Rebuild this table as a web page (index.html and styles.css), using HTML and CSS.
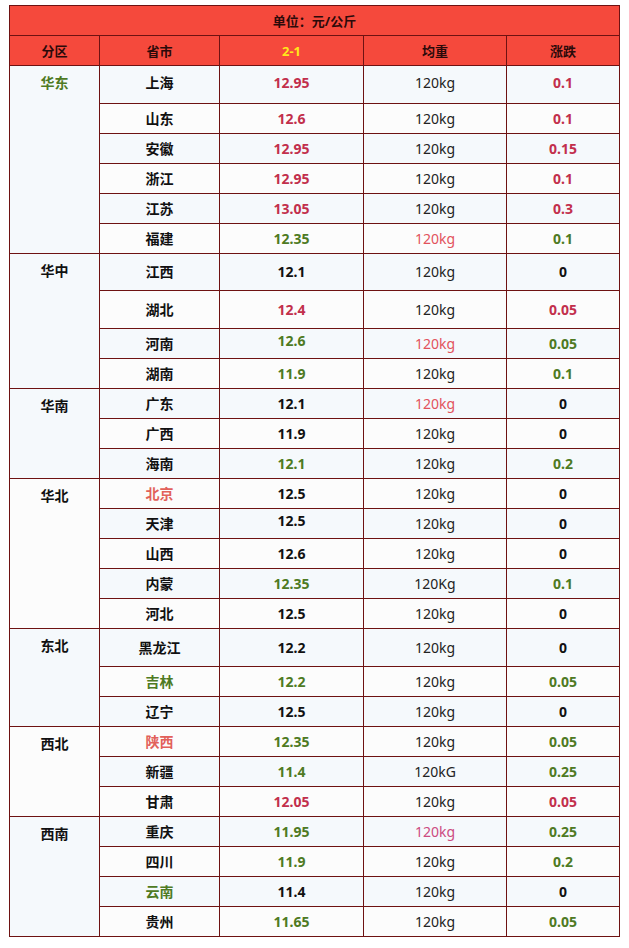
FILE: index.html
```html
<!DOCTYPE html>
<html lang="zh-CN">
<head>
<meta charset="utf-8">
<title>生猪价格</title>
<link rel="stylesheet" href="styles.css">
</head>
<body>
<table class="price">
  <colgroup>
    <col class="c1"><col class="c2"><col class="c3"><col class="c4"><col class="c5">
  </colgroup>
  <thead>
    <tr class="hd"><th colspan="5" class="unit">单位：元/公斤</th></tr>
    <tr class="hd"><th>分区</th><th>省市</th><th class="yel">2-1</th><th>均重</th><th>涨跌</th></tr>
  </thead>
  <tbody>
    <tr class="odd tall first"><td rowspan="6" class="reg grn">华东</td><td class="prov">上海</td><td class="num red">12.95</td><td class="wt">120kg</td><td class="num red">0.1</td></tr>
    <tr class="even"><td class="prov">山东</td><td class="num red">12.6</td><td class="wt">120kg</td><td class="num red">0.1</td></tr>
    <tr class="odd"><td class="prov">安徽</td><td class="num red">12.95</td><td class="wt">120kg</td><td class="num red">0.15</td></tr>
    <tr class="even"><td class="prov">浙江</td><td class="num red">12.95</td><td class="wt">120kg</td><td class="num red">0.1</td></tr>
    <tr class="odd"><td class="prov">江苏</td><td class="num red">13.05</td><td class="wt">120kg</td><td class="num red">0.3</td></tr>
    <tr class="even"><td class="prov">福建</td><td class="num grn">12.35</td><td class="wt pink">120kg</td><td class="num grn">0.1</td></tr>

    <tr class="odd tall37"><td rowspan="4" class="reg">华中</td><td class="prov">江西</td><td class="num">12.1</td><td class="wt">120kg</td><td class="num">0</td></tr>
    <tr class="even tall"><td class="prov">湖北</td><td class="num red">12.4</td><td class="wt">120kg</td><td class="num red">0.05</td></tr>
    <tr class="odd"><td class="prov">河南</td><td class="num grn"><span class="up">12.6</span></td><td class="wt pink">120kg</td><td class="num grn">0.05</td></tr>
    <tr class="even"><td class="prov">湖南</td><td class="num grn">11.9</td><td class="wt">120kg</td><td class="num grn">0.1</td></tr>

    <tr class="odd"><td rowspan="3" class="reg">华南</td><td class="prov">广东</td><td class="num">12.1</td><td class="wt pink">120kg</td><td class="num">0</td></tr>
    <tr class="even"><td class="prov">广西</td><td class="num">11.9</td><td class="wt">120kg</td><td class="num">0</td></tr>
    <tr class="odd"><td class="prov">海南</td><td class="num grn">12.1</td><td class="wt">120kg</td><td class="num grn">0.2</td></tr>

    <tr class="even"><td rowspan="5" class="reg">华北</td><td class="prov salmon">北京</td><td class="num">12.5</td><td class="wt">120kg</td><td class="num">0</td></tr>
    <tr class="odd"><td class="prov">天津</td><td class="num"><span class="up">12.5</span></td><td class="wt">120kg</td><td class="num">0</td></tr>
    <tr class="even"><td class="prov">山西</td><td class="num">12.6</td><td class="wt">120kg</td><td class="num">0</td></tr>
    <tr class="odd"><td class="prov">内蒙</td><td class="num grn">12.35</td><td class="wt">120Kg</td><td class="num grn">0.1</td></tr>
    <tr class="even"><td class="prov">河北</td><td class="num">12.5</td><td class="wt">120kg</td><td class="num">0</td></tr>

    <tr class="odd tall"><td rowspan="3" class="reg">东北</td><td class="prov">黑龙江</td><td class="num">12.2</td><td class="wt">120kg</td><td class="num">0</td></tr>
    <tr class="even"><td class="prov grn">吉林</td><td class="num grn">12.2</td><td class="wt">120kg</td><td class="num grn">0.05</td></tr>
    <tr class="odd"><td class="prov">辽宁</td><td class="num">12.5</td><td class="wt">120kg</td><td class="num">0</td></tr>

    <tr class="even"><td rowspan="3" class="reg">西北</td><td class="prov salmon">陕西</td><td class="num grn">12.35</td><td class="wt">120kg</td><td class="num grn">0.05</td></tr>
    <tr class="odd"><td class="prov">新疆</td><td class="num grn">11.4</td><td class="wt">120kG</td><td class="num grn">0.25</td></tr>
    <tr class="even"><td class="prov">甘肃</td><td class="num red">12.05</td><td class="wt">120kg</td><td class="num red">0.05</td></tr>

    <tr class="odd"><td rowspan="4" class="reg">西南</td><td class="prov">重庆</td><td class="num grn">11.95</td><td class="wt magenta">120kg</td><td class="num grn">0.25</td></tr>
    <tr class="even"><td class="prov">四川</td><td class="num grn">11.9</td><td class="wt">120kg</td><td class="num grn">0.2</td></tr>
    <tr class="odd"><td class="prov grn">云南</td><td class="num">11.4</td><td class="wt">120kg</td><td class="num">0</td></tr>
    <tr class="even"><td class="prov">贵州</td><td class="num grn">11.65</td><td class="wt">120kg</td><td class="num grn">0.05</td></tr>
  </tbody>
</table>
</body>
</html>
```

FILE: styles.css
```css
html, body {
  margin: 0;
  padding: 0;
  background: #ffffff;
}

body {
  padding: 5px 0 0 9px;
  font-family: "Noto Sans", "Noto Sans CJK SC", sans-serif;
  font-size: 14px;
  color: #111111;
}

.price {
  border-collapse: collapse;
  table-layout: fixed;
  width: 610px;
  border: 1px solid #6e1212;
}

.c1 { width: 90px; }
.c2 { width: 120px; }
.c3 { width: 144px; }
.c4 { width: 143px; }
.c5 { width: 113px; }

.price th,
.price td {
  border: 1px solid #6e1212;
  padding: 0;
  height: 29px;
  line-height: 20px;
  text-align: center;
  vertical-align: middle;
}

.hd th {
  background: #f5493c;
  color: #2b0a0a;
  font-weight: 700;
  font-size: 13px;
}

.hd .yel {
  color: #ffe81a;
}

.odd td { background: #f5f9fc; }
.even td { background: #fcfcfc; }

.price .tall td { height: 37px; }
.price .tall37 td { height: 36px; }
.price .first td { height: 33px; padding-bottom: 4px; }

.price td.reg {
  vertical-align: top;
  padding-top: 7px;
  padding-bottom: 0;
  height: auto;
  font-weight: 700;
}

.prov,
.num {
  font-weight: 700;
}

.wt {
  font-weight: 400;
  color: #222222;
}

.price .red { color: #c22f4c; }
.price .grn { color: #4e7a23; }
.price .pink { color: #e2525c; }
.price .magenta { color: #cc4a80; }
.price .salmon { color: #e2605a; }

.up {
  position: relative;
  top: -3px;
}
```
